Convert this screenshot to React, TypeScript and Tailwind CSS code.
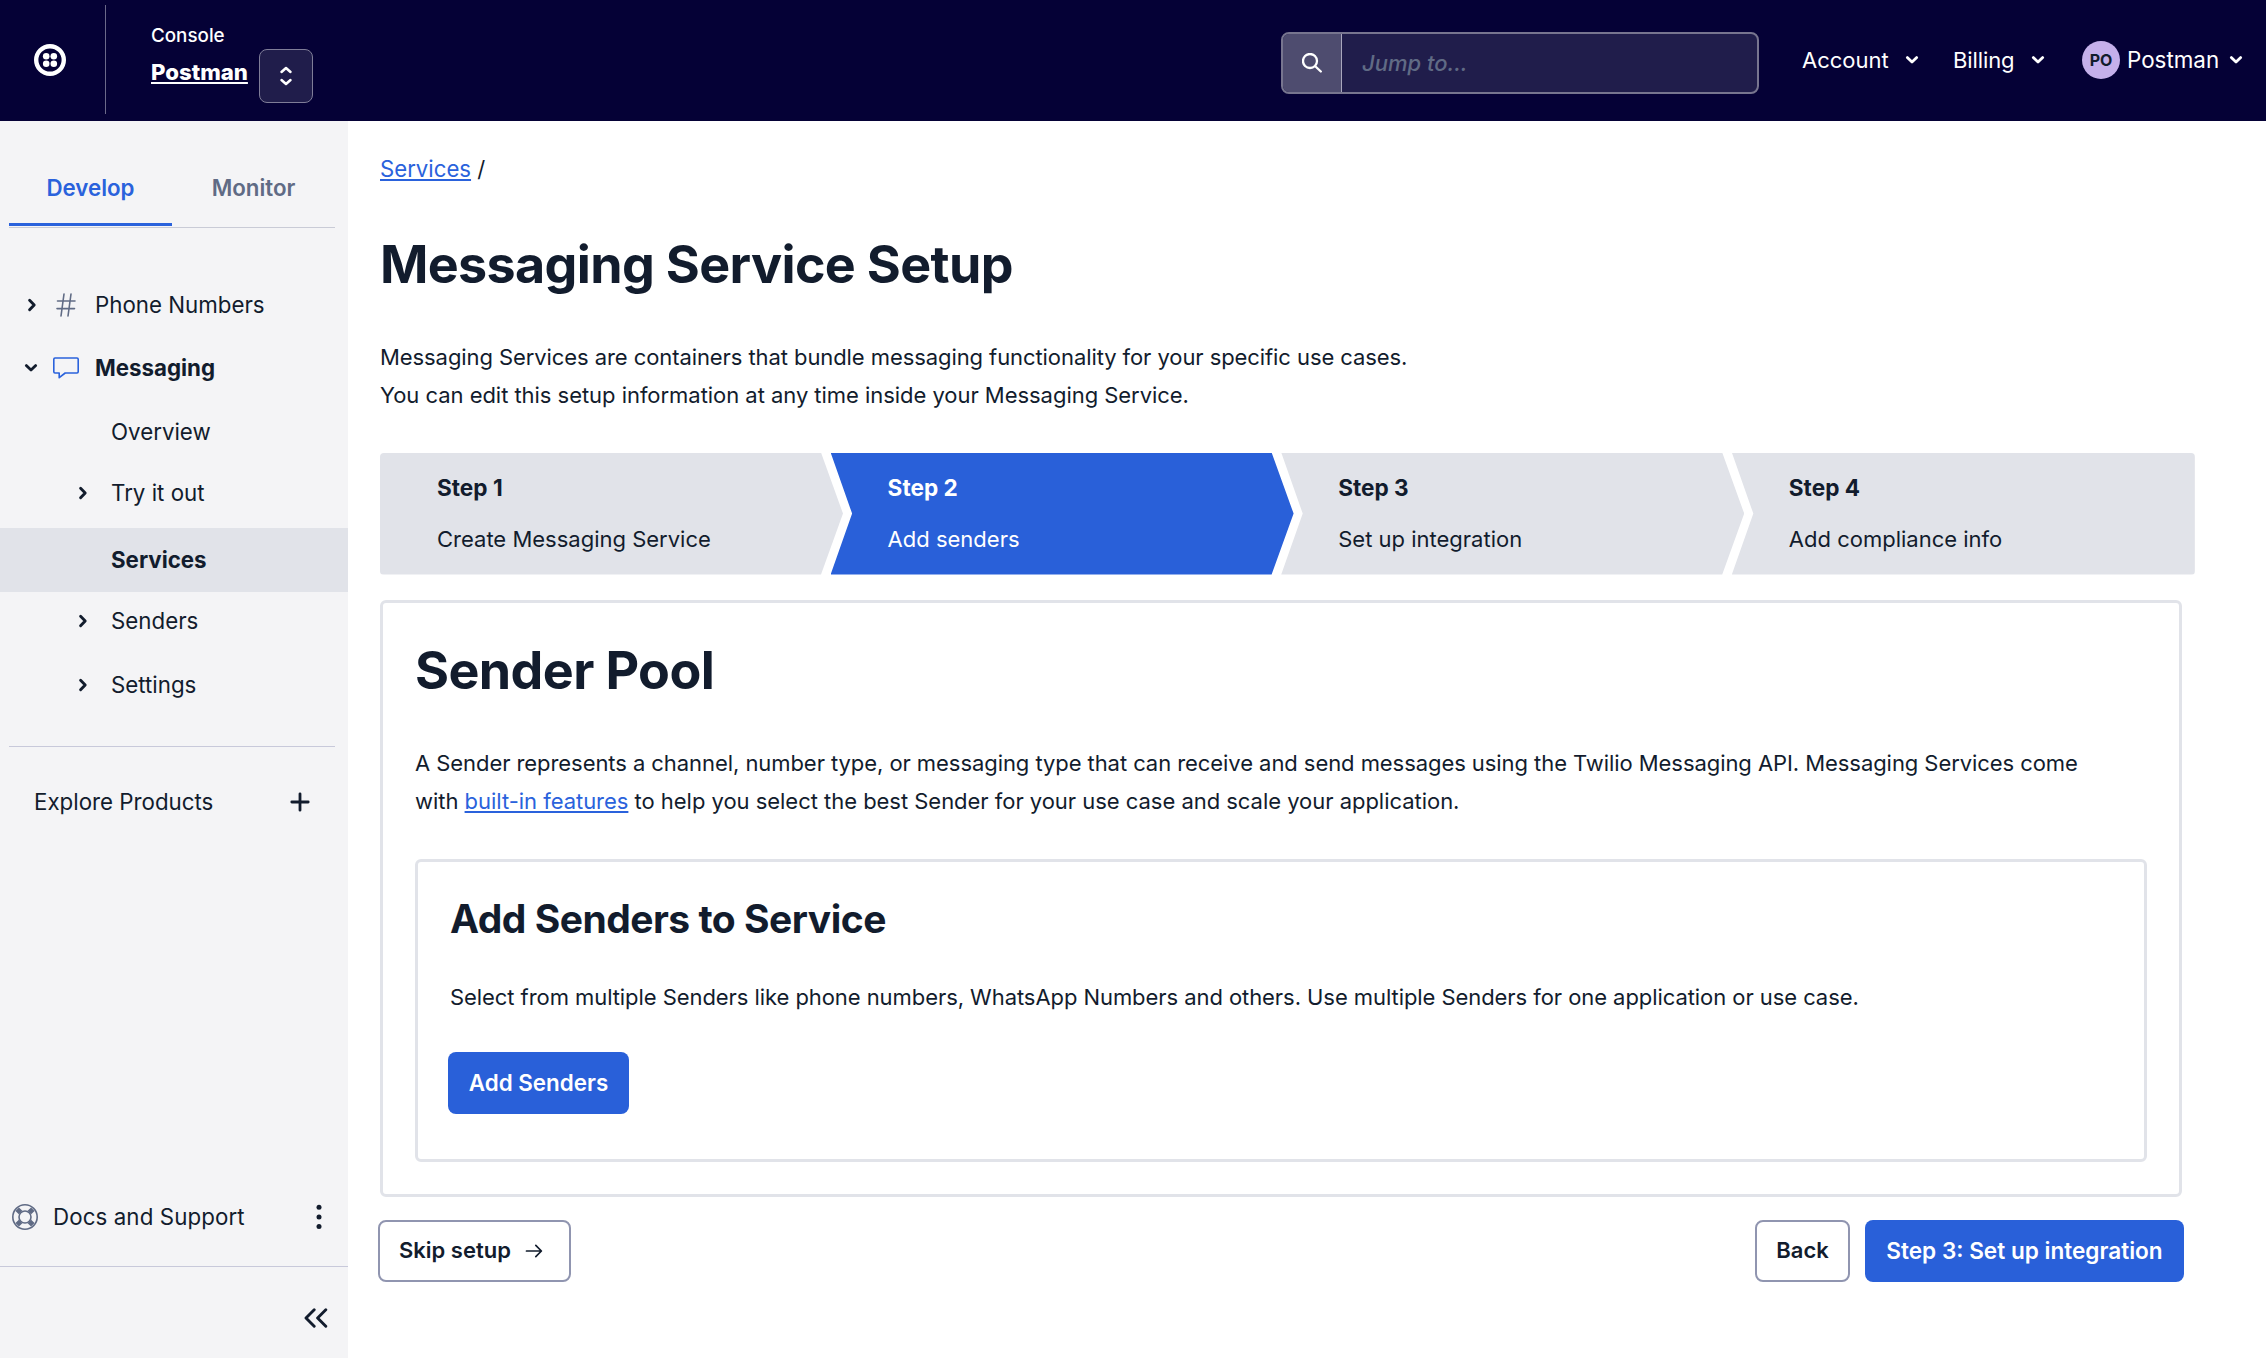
import React from "react";

type IconProps = { className?: string };

const ChevronDown = ({ className = "" }: IconProps) => (
  <svg viewBox="0 0 14 10" fill="none" stroke="currentColor" strokeWidth="2.8" strokeLinecap="round" strokeLinejoin="round" className={`h-[10px] w-[14px] shrink-0 ${className}`}>
    <path d="M2.3 2.6 7 7.1l4.7-4.5" />
  </svg>
);

const ChevronRight = ({ className = "" }: IconProps) => (
  <svg viewBox="0 0 10 14" fill="none" stroke="currentColor" strokeWidth="2.9" strokeLinecap="round" strokeLinejoin="round" className={`h-[14px] w-[10px] shrink-0 ${className}`}>
    <path d="M2.6 2.3 7.2 7l-4.6 4.7" />
  </svg>
);

const Logo = () => (
  <svg viewBox="0 0 32 32" className="h-8 w-8 shrink-0" fill="#fff">
    <circle cx="16" cy="16" r="13.8" fill="none" stroke="#fff" strokeWidth="4.4" />
    <circle cx="12.2" cy="12.2" r="3.3" />
    <circle cx="19.8" cy="12.2" r="3.3" />
    <circle cx="12.2" cy="19.8" r="3.3" />
    <circle cx="19.8" cy="19.8" r="3.3" />
  </svg>
);

const HashIcon = () => (
  <svg viewBox="0 0 20 24" fill="none" stroke="#606b85" strokeWidth="1.6" strokeLinecap="round" className="h-6 w-5">
    <path d="M8 1 5 23M15 1l-3 22M1.5 8h17.5M1 15.6h17.5" />
  </svg>
);

const ChatIcon = () => (
  <svg viewBox="0 0 26 22" fill="none" stroke="#2a62dc" strokeWidth="1.6" strokeLinejoin="round" className="h-[22px] w-[26px]">
    <path d="M2 1h22q1.200 0 1.200 1.200v12.600q0 1.200-1.200 1.200H12.200L6.200 20.700V16H2Q.8 16 .8 14.800V2.200Q.8 1 2 1Z" />
  </svg>
);

const LifebuoyIcon = () => (
  <svg viewBox="0 0 26 26" fill="none" stroke="#606b85" className="h-[26px] w-[26px] shrink-0">
    <circle cx="13" cy="13" r="12.2" strokeWidth="1.6" />
    <circle cx="13" cy="13" r="6" strokeWidth="1.6" />
    <path d="m5.200 5.200 3.400 3.400M20.800 5.200l-3.400 3.400M5.200 20.800l3.400-3.400M20.800 20.800l-3.400-3.400" strokeWidth="5" />
  </svg>
);

function Header() {
  return (
    <header className="flex h-[121px] shrink-0 bg-[#050136] text-[22px] text-white">
      <div className="mt-[5px] flex h-[109px] w-[106px] items-center border-r border-[#6b6989] pt-[1px] pl-[34px]">
        <Logo />
      </div>
      <div className="ml-[45px] pt-6">
        <div className="text-[18.8px] leading-6 font-medium">Console</div>
        <div className="mt-[7px] text-[22.2px] leading-[34px] font-extrabold underline decoration-2 underline-offset-[2px]">Postman</div>
      </div>
      <button className="mt-[49px] ml-[11px] flex h-[54px] w-[54px] items-center justify-center rounded-lg border-[1.5px] border-[#7f7d98] bg-[#201d4b]">
        <svg viewBox="0 0 14 20" fill="none" stroke="currentColor" strokeWidth="2.5" strokeLinecap="round" strokeLinejoin="round" className="h-5 w-3.5">
          <path d="M2.500 6 7 2l4.500 4M2.500 14l4.500 4 4.500-4" />
        </svg>
      </button>
      <div className="mt-[32px] ml-auto flex h-[62px] w-[478px] overflow-hidden rounded-lg border-2 border-[#77758f] bg-[#201d4b]">
        <div className="flex w-[59px] items-center justify-center border-r border-[#a9a7bd] bg-[#4e4c6f]">
          <svg viewBox="0 0 20 20" fill="none" stroke="currentColor" strokeWidth="2.3" strokeLinecap="round" className="h-5 w-5">
            <circle cx="8" cy="8" r="7" />
            <path d="m13.500 13.500 5.300 5" />
          </svg>
        </div>
        <div className="pl-[20px] leading-[58px] font-medium text-[#606b85] italic">Jump to...</div>
      </div>
      <nav className="flex h-[120px] w-[507px] items-center pl-[43px]">
        <span className="w-[103px]">Account</span>
        <ChevronDown />
        <span className="ml-[34px] w-[78px] tracking-[-0.1px]">Billing</span>
        <ChevronDown />
        <span className="ml-[37px] flex h-[38px] w-[38px] items-center justify-center rounded-full bg-[#c5b0eb] text-[16px] font-bold text-[#121c2d]">PO</span>
        <span className="ml-[7px] w-[102px] text-[22.4px]">Postman</span>
        <ChevronDown />
      </nav>
    </header>
  );
}

function SubItem({ label, height, arrow }: { label: string; height: string; arrow?: boolean }) {
  return (
    <div className={`flex items-center pl-[78px] ${height}`}>
      <span className="w-[33px]">{arrow && <ChevronRight />}</span>
      {label}
    </div>
  );
}

function Sidebar() {
  return (
    <aside className="flex w-[348px] shrink-0 flex-col bg-[#f4f4f6] text-[22.3px]">
      <div className="mt-[29px] ml-[9px] flex h-[78px] w-[326px] border-b border-[#c9cbd6] font-semibold">
        <div className="mb-[1px] h-[76px] w-[163px] border-b-[3px] border-[#2a62dc] pt-[18px] text-center leading-[40px] text-[#2a62dc]">Develop</div>
        <div className="w-[163px] pt-[18px] text-center leading-[40px] text-[#606b85]">Monitor</div>
      </div>
      <div className="mt-[45px] flex h-[64px] items-center pl-[27px]">
        <ChevronRight />
        <span className="ml-[19px] flex w-[39px]"><HashIcon /></span>
        Phone Numbers
      </div>
      <div className="flex h-[62px] items-center pl-[24px] font-bold">
        <ChevronDown />
        <span className="mr-[16px] ml-[15px]"><ChatIcon /></span>
        Messaging
      </div>
      <SubItem label="Overview" height="h-[66px]" />
      <SubItem label="Try it out" height="h-[56px]" arrow />
      <div className="mt-[7px] flex h-[64px] items-center bg-[#e1e3e9] pl-[111px] font-bold">Services</div>
      <SubItem label="Senders" height="h-[58px]" arrow />
      <SubItem label="Settings" height="h-[70px]" arrow />
      <div className="mt-[26px] ml-[9px] h-px w-[326px] bg-[#c8c9da]" />
      <div className="mt-[25px] flex h-[60px] items-center justify-between pr-[38px] pl-[34px]">
        Explore Products
        <svg viewBox="0 0 20 20" fill="none" stroke="currentColor" strokeWidth="2.8" strokeLinecap="round" className="h-5 w-5">
          <path d="M10 1.800v16.400M1.800 10h16.400" />
        </svg>
      </div>
      <div className="mt-auto flex h-[40px] items-center pl-[12px]">
        <LifebuoyIcon />
        <span className="ml-[15px] tracking-[0.1px]">Docs and Support</span>
        <svg viewBox="0 0 6 26" fill="currentColor" className="mr-[26px] ml-auto h-[26px] w-1.5">
          <circle cx="3" cy="3.2" r="2.5" />
          <circle cx="3" cy="13" r="2.5" />
          <circle cx="3" cy="22.5" r="2.5" />
        </svg>
      </div>
      <div className="mt-[29px] flex h-[92px] justify-end border-t border-[#c8c9da] pt-[41px] pr-[19px]">
        <svg viewBox="0 0 26 20" fill="none" stroke="currentColor" strokeWidth="2.9" strokeLinecap="round" strokeLinejoin="round" className="h-5 w-[26px]">
          <path d="M11.200 1.800 3 10l8.200 8.200M22.800 1.800 14.600 10l8.200 8.200" />
        </svg>
      </div>
    </aside>
  );
}

const firstShape = "rounded-l [clip-path:polygon(0_0,441px_0,100%_50%,441px_100%,0_100%)]";
const middleShape = "-ml-[12.4px] [clip-path:polygon(0_0,441px_0,100%_50%,441px_100%,0_100%,21.5px_50%)]";
const lastShape = "-ml-[12.4px] rounded-r [clip-path:polygon(0_0,100%_0,100%_100%,0_100%,21.5px_50%)]";

const steps = [
  { title: "Step 1", label: "Create Messaging Service", style: `bg-[#e1e3e9] ${firstShape}` },
  { title: "Step 2", label: "Add senders", style: `bg-[#2960d9] text-white ${middleShape}` },
  { title: "Step 3", label: "Set up integration", style: `bg-[#e1e3e9] ${middleShape}` },
  { title: "Step 4", label: "Add compliance info", style: `bg-[#e1e3e9] ${lastShape}` },
];

function Stepper() {
  return (
    <div className="mt-[38px] flex">
      {steps.map((s) => (
        <div key={s.title} className={`h-[122px] w-[463px] shrink-0 pt-[15px] pl-[57px] ${s.style}`}>
          <div className="text-[22.6px] leading-[40px] font-bold">{s.title}</div>
          <div className="mt-[11px] leading-[40px]">{s.label}</div>
        </div>
      ))}
    </div>
  );
}

export default function App() {
  return (
    <div className="flex h-[1358px] w-[2266px] flex-col overflow-hidden bg-white font-['Inter',sans-serif] text-[#121c2d]">
      <Header />
      <div className="flex min-h-0 flex-1">
        <Sidebar />
        <main className="flex-1 pl-8 text-[22px]">
          <div className="pt-[30px] text-[22.2px] leading-[36px]">
            <a className="text-[#2a62dc] underline decoration-2 underline-offset-[2px]">Services</a> /
          </div>
          <h1 className="mt-[48px] text-[52px] leading-[60px] font-bold tracking-[-0.65px]">Messaging Service Setup</h1>
          <p className="mt-[43px] leading-[38.3px] tracking-[-0.08px]">
            Messaging Services are containers that bundle messaging functionality for your specific use cases.
            <br />
            <span className="tracking-[-0.04px]">You can edit this setup information at any time inside your Messaging Service.</span>
          </p>
          <Stepper />
          <section className="mt-[25px] h-[597px] w-[1802px] rounded-md border-[3px] border-[#e1e3e9] pl-8">
            <h2 className="mt-[38px] text-[52px] leading-[60px] font-bold tracking-[-0.6px]">Sender Pool</h2>
            <p className="mt-[43px] leading-[38.5px] tracking-[-0.065px]">
              A Sender represents a channel, number type, or messaging type that can receive and send messages using the Twilio Messaging API. Messaging Services come
              <br />
              <span className="tracking-[-0.03px]">
                with <a className="text-[#2a62dc] underline decoration-2 underline-offset-[2px]">built-in features</a> to help you select the best Sender for your use case and scale your application.
              </span>
            </p>
            <div className="mt-[38px] h-[303px] w-[1732px] rounded-md border-[3px] border-[#e1e3e9] pl-8">
              <h3 className="mt-[33px] text-[39px] leading-[48px] font-bold tracking-[-0.5px]">Add Senders to Service</h3>
              <p className="mt-[35px] leading-[38px] tracking-[-0.065px]">
                Select from multiple Senders like phone numbers, WhatsApp Numbers and others. Use multiple Senders for one application or use case.
              </p>
              <button className="mt-[36px] -ml-[2px] h-[62px] w-[181px] rounded-lg bg-[#2960d9] text-[22.4px] font-semibold text-white">Add Senders</button>
            </div>
          </section>
          <div className="mt-[23px] -ml-[2px] flex w-[1806px] text-[22px] font-semibold">
            <button className="flex h-[62px] w-[193px] items-center rounded-lg border-2 border-[#9095b0] pl-[19px]">
              Skip setup
              <svg viewBox="0 0 18 14" fill="none" stroke="currentColor" strokeWidth="1.7" strokeLinecap="round" strokeLinejoin="round" className="ml-[14px] h-[14px] w-[18px]">
                <path d="M1.500 7h14.800M10.800 1.400 16.400 7l-5.600 5.600" />
              </svg>
            </button>
            <button className="ml-auto h-[62px] w-[95px] rounded-lg border-2 border-[#9095b0]">Back</button>
            <button className="ml-[15px] h-[62px] w-[319px] rounded-lg bg-[#2960d9] text-[22.6px] text-white">Step 3: Set up integration</button>
          </div>
        </main>
      </div>
    </div>
  );
}
